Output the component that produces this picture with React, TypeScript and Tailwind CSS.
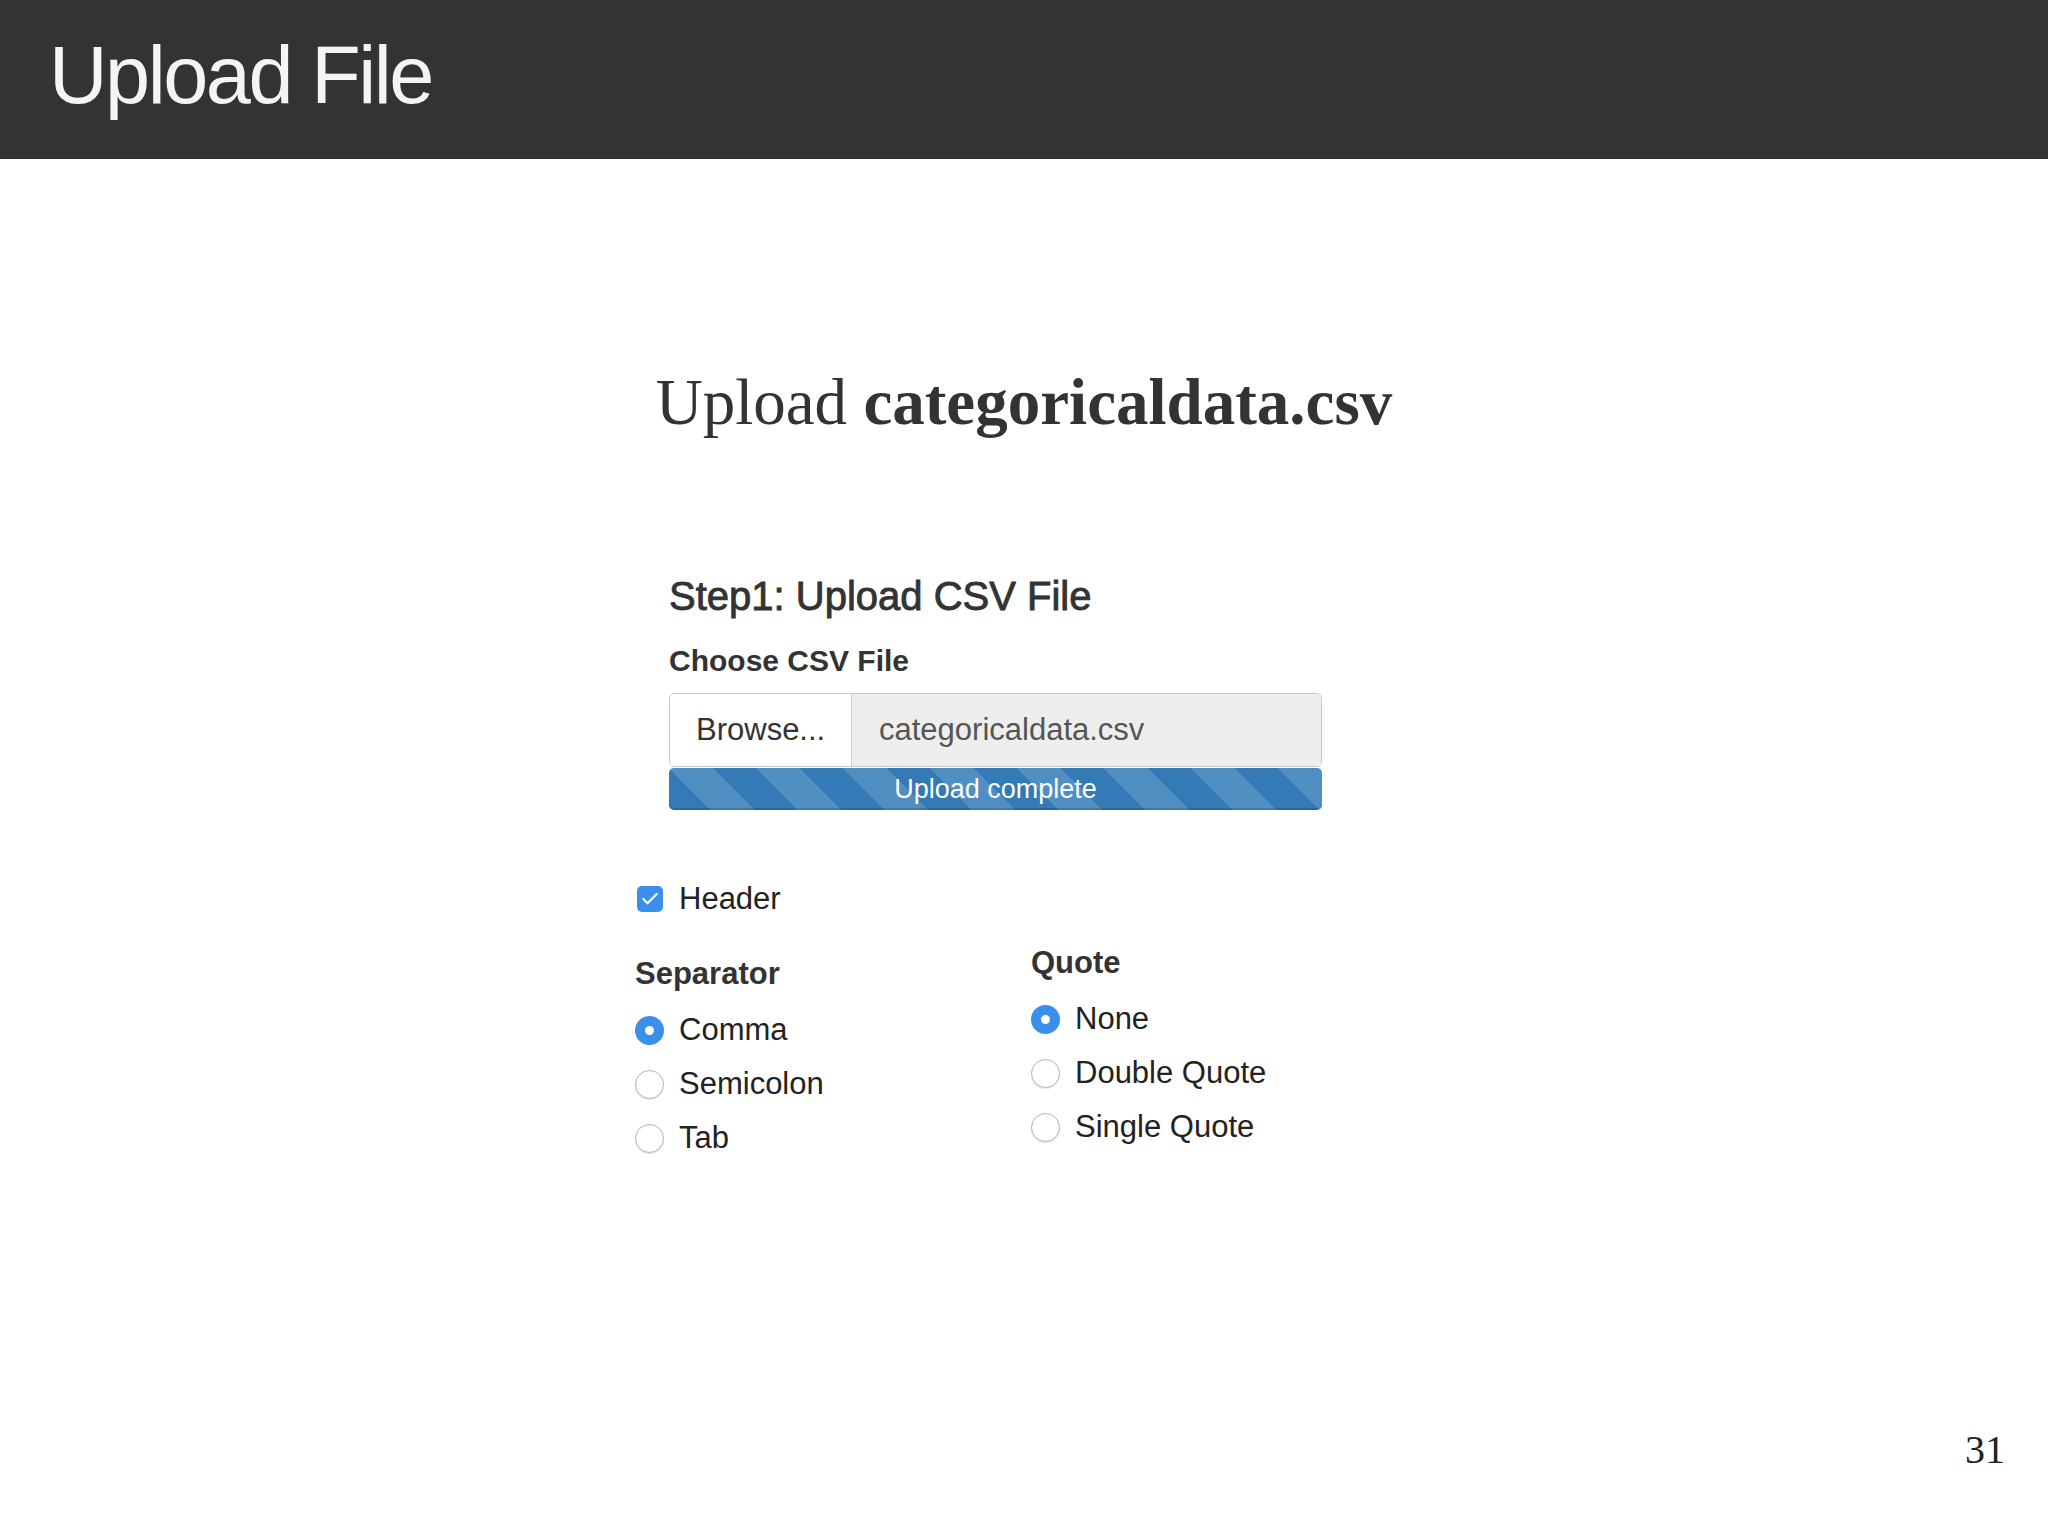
import { Check } from 'lucide-react'

const SEPARATORS = [
  { id: 'comma', label: 'Comma' },
  { id: 'semicolon', label: 'Semicolon' },
  { id: 'tab', label: 'Tab' },
]

const QUOTES = [
  { id: 'none', label: 'None' },
  { id: 'double', label: 'Double Quote' },
  { id: 'single', label: 'Single Quote' },
]

function Radio({ checked, label }: { checked: boolean; label: string }) {
  return (
    <div className="flex h-[36px] items-center gap-[15px]">
      {checked ? (
        <span className="flex h-[29px] w-[29px] items-center justify-center rounded-full bg-[#3b8eea]">
          <span className="h-[9px] w-[9px] rounded-full bg-white" />
        </span>
      ) : (
        <span className="h-[29px] w-[29px] rounded-full border-[1.5px] border-[#b4b4b4] bg-white shadow-[0_1px_1px_rgba(0,0,0,0.1)]" />
      )}
      <span className="text-[31px] leading-[36px] text-[#222]">{label}</span>
    </div>
  )
}

function RadioGroup({ title, options, selected, offset }: {
  title: string
  options: { id: string; label: string }[]
  selected: string
  offset: string
}) {
  return (
    <div className={offset}>
      <div className="text-[31px] font-bold leading-[36px] text-[#333]">{title}</div>
      <div className="mt-[20px] flex flex-col gap-[18px]">
        {options.map(o => (
          <Radio key={o.id} checked={o.id === selected} label={o.label} />
        ))}
      </div>
    </div>
  )
}

export default function App() {
  return (
    <div className="flex h-[1536px] flex-col bg-white font-['Liberation_Sans',Arial,sans-serif]">
      <header className="flex h-[159px] items-center bg-[#333333] pb-2 pl-[49px]">
        <h1 className="text-[81px] leading-none tracking-[-0.03em] text-[#f4f4f4]">Upload File</h1>
      </header>

      <main className="flex flex-1 flex-col">
        <h2 className="mt-[205px] text-center font-['Liberation_Serif','Times_New_Roman',serif] text-[65px] leading-[76px] text-[#333]">
          Upload <span className="font-bold">categoricaldata.csv</span>
        </h2>

        <div className="ml-[635px] mt-[133px] w-[720px]">
          <div className="ml-[34px] w-[653px]">
            <h3 className="text-[40px] leading-[46px] text-[#333] [-webkit-text-stroke:0.9px_#333]">
              Step1: Upload CSV File
            </h3>
            <div className="mt-[24px] text-[30px] font-bold leading-[36px] text-[#333]">Choose CSV File</div>
            <div className="mt-[14px] flex h-[74px] overflow-hidden rounded-[5px] border border-[#c8c8c8] shadow-[inset_0_1px_1px_rgba(0,0,0,0.075)]">
              <div className="flex w-[182px] items-center border-r border-[#cccccc] bg-white pl-[26px] text-[31px] text-[#333]">
                Browse...
              </div>
              <div className="flex flex-1 items-center bg-[#eeeeee] pl-[27px] text-[31px] text-[#555]">
                categoricaldata.csv
              </div>
            </div>
            <div className="mt-[1px] flex h-[42px] items-center justify-center rounded-[5px] bg-[#337ab7] bg-[linear-gradient(45deg,rgba(255,255,255,0.15)_25%,transparent_25%,transparent_50%,rgba(255,255,255,0.15)_50%,rgba(255,255,255,0.15)_75%,transparent_75%,transparent)] bg-size-[87px_87px] text-[27px] leading-[42px] text-white shadow-[inset_0_-2px_0_rgba(0,0,0,0.15)]">
              Upload complete
            </div>
          </div>

          <label className="ml-[2px] mt-[71px] flex h-[36px] items-center gap-[16px]">
            <span className="flex h-[26px] w-[26px] items-center justify-center rounded-[5px] bg-[#3b8eea]">
              <Check className="h-[20px] w-[20px] text-white" strokeWidth={2.6} />
            </span>
            <span className="text-[31px] leading-[36px] text-[#222]">Header</span>
          </label>

          <div className="grid grid-cols-[396px_1fr] items-start">
            <RadioGroup title="Separator" options={SEPARATORS} selected="comma" offset="mt-[39px]" />
            <RadioGroup title="Quote" options={QUOTES} selected="none" offset="mt-[28px]" />
          </div>
        </div>
      </main>

      <footer className="pb-[62px] pr-[43px] text-right font-['Liberation_Serif','Times_New_Roman',serif] text-[40px] leading-[48px] text-[#222]">
        31
      </footer>
    </div>
  )
}
